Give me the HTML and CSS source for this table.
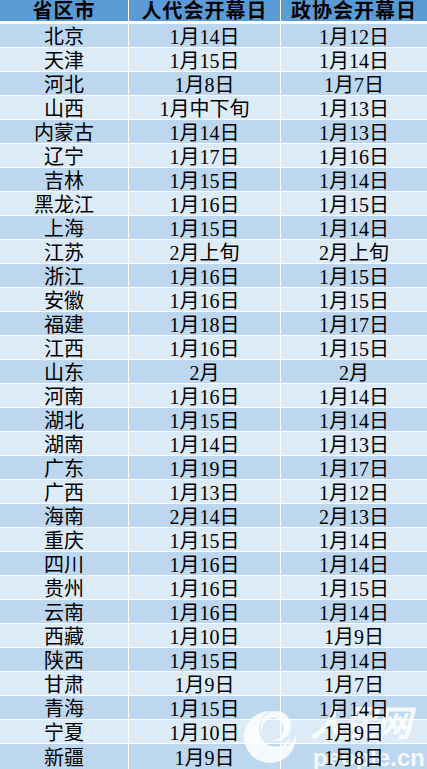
FILE: index.html
```html
<!DOCTYPE html>
<html lang="zh-CN">
<head>
<meta charset="utf-8">
<title>各省区市两会开幕日</title>
<link rel="stylesheet" href="styles.css">
</head>
<body>
<div class="sheet">
  <div class="row head"><div class="cell"><span>省区市</span></div><div class="cell"><span>人代会开幕日</span></div><div class="cell"><span>政协会开幕日</span></div></div>
  <div class="row dark"><div class="cell"><span>北京</span></div><div class="cell"><span>1月14日</span></div><div class="cell"><span>1月12日</span></div></div>
  <div class="row light"><div class="cell"><span>天津</span></div><div class="cell"><span>1月15日</span></div><div class="cell"><span>1月14日</span></div></div>
  <div class="row dark"><div class="cell"><span>河北</span></div><div class="cell"><span>1月8日</span></div><div class="cell"><span>1月7日</span></div></div>
  <div class="row light"><div class="cell"><span>山西</span></div><div class="cell"><span>1月中下旬</span></div><div class="cell"><span>1月13日</span></div></div>
  <div class="row dark"><div class="cell"><span>内蒙古</span></div><div class="cell"><span>1月14日</span></div><div class="cell"><span>1月13日</span></div></div>
  <div class="row light"><div class="cell"><span>辽宁</span></div><div class="cell"><span>1月17日</span></div><div class="cell"><span>1月16日</span></div></div>
  <div class="row dark"><div class="cell"><span>吉林</span></div><div class="cell"><span>1月15日</span></div><div class="cell"><span>1月14日</span></div></div>
  <div class="row light"><div class="cell"><span>黑龙江</span></div><div class="cell"><span>1月16日</span></div><div class="cell"><span>1月15日</span></div></div>
  <div class="row dark"><div class="cell"><span>上海</span></div><div class="cell"><span>1月15日</span></div><div class="cell"><span>1月14日</span></div></div>
  <div class="row light"><div class="cell"><span>江苏</span></div><div class="cell"><span>2月上旬</span></div><div class="cell"><span>2月上旬</span></div></div>
  <div class="row dark"><div class="cell"><span>浙江</span></div><div class="cell"><span>1月16日</span></div><div class="cell"><span>1月15日</span></div></div>
  <div class="row light"><div class="cell"><span>安徽</span></div><div class="cell"><span>1月16日</span></div><div class="cell"><span>1月15日</span></div></div>
  <div class="row dark"><div class="cell"><span>福建</span></div><div class="cell"><span>1月18日</span></div><div class="cell"><span>1月17日</span></div></div>
  <div class="row light"><div class="cell"><span>江西</span></div><div class="cell"><span>1月16日</span></div><div class="cell"><span>1月15日</span></div></div>
  <div class="row dark"><div class="cell"><span>山东</span></div><div class="cell"><span>2月</span></div><div class="cell"><span>2月</span></div></div>
  <div class="row light"><div class="cell"><span>河南</span></div><div class="cell"><span>1月16日</span></div><div class="cell"><span>1月14日</span></div></div>
  <div class="row dark"><div class="cell"><span>湖北</span></div><div class="cell"><span>1月15日</span></div><div class="cell"><span>1月14日</span></div></div>
  <div class="row light"><div class="cell"><span>湖南</span></div><div class="cell"><span>1月14日</span></div><div class="cell"><span>1月13日</span></div></div>
  <div class="row dark"><div class="cell"><span>广东</span></div><div class="cell"><span>1月19日</span></div><div class="cell"><span>1月17日</span></div></div>
  <div class="row light"><div class="cell"><span>广西</span></div><div class="cell"><span>1月13日</span></div><div class="cell"><span>1月12日</span></div></div>
  <div class="row dark"><div class="cell"><span>海南</span></div><div class="cell"><span>2月14日</span></div><div class="cell"><span>2月13日</span></div></div>
  <div class="row light"><div class="cell"><span>重庆</span></div><div class="cell"><span>1月15日</span></div><div class="cell"><span>1月14日</span></div></div>
  <div class="row dark"><div class="cell"><span>四川</span></div><div class="cell"><span>1月16日</span></div><div class="cell"><span>1月14日</span></div></div>
  <div class="row light"><div class="cell"><span>贵州</span></div><div class="cell"><span>1月16日</span></div><div class="cell"><span>1月15日</span></div></div>
  <div class="row dark"><div class="cell"><span>云南</span></div><div class="cell"><span>1月16日</span></div><div class="cell"><span>1月14日</span></div></div>
  <div class="row light"><div class="cell"><span>西藏</span></div><div class="cell"><span>1月10日</span></div><div class="cell"><span>1月9日</span></div></div>
  <div class="row dark"><div class="cell"><span>陕西</span></div><div class="cell"><span>1月15日</span></div><div class="cell"><span>1月14日</span></div></div>
  <div class="row light"><div class="cell"><span>甘肃</span></div><div class="cell"><span>1月9日</span></div><div class="cell"><span>1月7日</span></div></div>
  <div class="row dark"><div class="cell"><span>青海</span></div><div class="cell"><span>1月15日</span></div><div class="cell"><span>1月14日</span></div></div>
  <div class="row light"><div class="cell"><span>宁夏</span></div><div class="cell"><span>1月10日</span></div><div class="cell"><span>1月9日</span></div></div>
  <div class="row dark"><div class="cell"><span>新疆</span></div><div class="cell"><span>1月9日</span></div><div class="cell"><span>1月8日</span></div></div>
</div>
<div class="watermark">
  <svg class="logo" width="54" height="66" viewBox="0 0 54 66">
    <defs>
      <mask id="m1">
        <rect width="54" height="66" fill="#fff"/>
        <circle cx="34" cy="28" r="19" fill="#000"/>
      </mask>
      <mask id="m2">
        <rect width="54" height="66" fill="#fff"/>
        <circle cx="29" cy="28" r="11" fill="#000"/>
      </mask>
    </defs>
    <circle cx="26" cy="36" r="26" fill="#fff" mask="url(#m1)"/>
    <circle cx="32" cy="25" r="15" fill="#fff" mask="url(#m2)"/>
    <path d="M22 43 C31 49 43 45 47 34 C45 47 33 55 20 49 Z" fill="#fff"/>
  </svg>
  <span class="brand">人民网</span>
  <span class="site">people.cn</span>
</div>
</body>
</html>
```
FILE: styles.css
```css
html, body {
  margin: 0;
  padding: 0;
  background: #ffffff;
  overflow: hidden;
}

body {
  width: 427px;
  height: 769px;
  position: relative;
  font-family: "Liberation Serif", "Noto Sans CJK SC", serif;
  color: #000;
}

.sheet {
  display: grid;
  grid-template-columns: 128px 151px 146px;
  grid-template-rows: 23px repeat(30, 23px) 25px;
  column-gap: 1px;
  row-gap: 1px;
  background: #ffffff;
}

.row {
  display: contents;
}

.cell {
  display: flex;
  align-items: center;
  justify-content: center;
  font-size: 20px;
  white-space: nowrap;
}

.cell span {
  position: relative;
  z-index: 2;
  display: block;
  line-height: 20px;
  padding-top: 2px;
}

.head .cell {
  background: #5b9bd5;
  height: 21px;
  align-self: start;
  font-size: 20px;
  font-weight: bold;
}

.head .cell span {
  line-height: 20px;
  padding-top: 1px;
  letter-spacing: 1px;
}

.dark .cell {
  background: #bdd7ee;
}

.light .cell {
  background: #ddebf7;
}

.watermark {
  position: absolute;
  left: 238px;
  top: 695px;
  width: 189px;
  height: 74px;
  z-index: 1;
  opacity: 0.85;
  overflow: hidden;
}

.logo {
  position: absolute;
  left: 6px;
  top: 6px;
}

.brand {
  position: absolute;
  left: 72px;
  top: 2px;
  font-family: "Noto Sans CJK SC", sans-serif;
  font-size: 36px;
  font-style: italic;
  font-weight: bold;
  line-height: 46px;
  color: #fff;
  letter-spacing: -3px;
}

.site {
  position: absolute;
  left: 75px;
  top: 49px;
  font-family: "Liberation Sans", Arial, sans-serif;
  font-size: 24px;
  font-weight: bold;
  line-height: 28px;
  color: #fff;
}
```
